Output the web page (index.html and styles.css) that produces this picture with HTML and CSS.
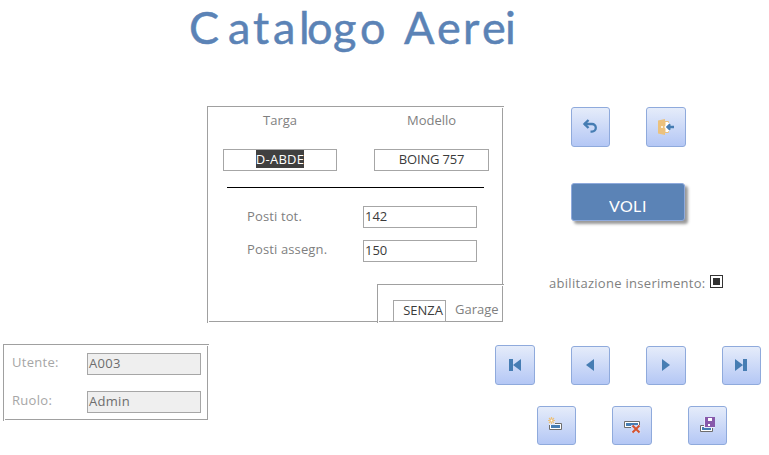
FILE: index.html
```html
<!DOCTYPE html>
<html lang="it">
<head>
<meta charset="utf-8">
<title>Catalogo Aerei</title>
<link rel="stylesheet" href="styles.css">
</head>
<body>
<header>
<svg class="title" width="340" height="65" role="img" aria-label="Catalogo Aerei"><text y="44" x="7 46 71 91 117 125 151 178 204 222 255 281 300 323">Catalogo Aerei</text></svg>
</header>
<main>
<section class="frame plane">
  <div class="heads"><span class="targa">Targa</span><span class="modello">Modello</span></div>
  <div class="ids"><div class="field center"><mark>D-ABDE</mark></div><div class="field center wide">BOING 757</div></div>
  <hr>
  <div class="row"><label>Posti tot.</label><div class="field">142</div></div>
  <div class="row second"><label>Posti assegn.</label><div class="field">150</div></div>
  <div class="frame garage"><div class="field small">SENZA</div><label>Garage</label></div>
</section>
<section class="actions">
  <div class="pair">
    <button class="btn" aria-label="Annulla"><svg width="17" height="16" viewBox="0 0 17 16"><path d="M2 5h8a3.800 3.800 0 0 1 0 7.600H8.500" fill="none" stroke="#467db3" stroke-width="2.300"/><path d="M6.500 1L2.500 5l4 4" fill="none" stroke="#467db3" stroke-width="2.400"/></svg></button>
    <button class="btn w40" aria-label="Esci"><svg width="18" height="18" viewBox="0 0 18 18"><path d="M8 3.500h3.500v11H8z" fill="#fff" stroke="#ebc17d"/><path d="M1 2.500L8 1v16l-7-1.500z" fill="#ebc17d"/><circle cx="5" cy="9" r="1" fill="#fff"/><path d="M10 9h3M13 6l-3 3l3 3" fill="none" stroke="#fff" stroke-width="4"/><path d="M10.500 9H17M13.200 6.200L10.400 9l2.800 2.800" fill="none" stroke="#467db3" stroke-width="2.300"/></svg></button>
  </div>
  <button class="voli"><svg width="40" height="20"><text y="16" x="0 11 24 33">VOLI</text></svg></button>
  <div class="enable"><label>abilitazione inserimento:</label><span class="check"></span></div>
</section>
</main>
<footer>
<section class="frame user">
  <div class="row"><label>Utente:</label><div class="field">A003</div></div>
  <div class="row"><label>Ruolo:</label><div class="field">Admin</div></div>
</section>
<nav>
  <div class="nav">
    <button class="btn w40 h40" aria-label="Primo"><svg width="14" height="14" viewBox="0 0 14 14"><path d="M1 1h4v12H1zM13 1v12L5 7z" fill="#467db3"/></svg></button>
    <button class="btn" aria-label="Precedente"><svg width="15" height="15" viewBox="0 0 15 15"><path d="M11 1v12L3 7z" fill="#467db3"/></svg></button>
    <button class="btn w40" aria-label="Successivo"><svg width="14" height="15" viewBox="0 0 14 15"><path d="M3 1v12l8-6z" fill="#467db3"/></svg></button>
    <button class="btn" aria-label="Ultimo"><svg width="15" height="15" viewBox="0 0 15 15"><path d="M1 1v12l8-6zM9 1h4v12H9z" fill="#467db3"/></svg></button>
  </div>
  <div class="edit">
    <button class="btn" aria-label="Nuovo"><svg width="17" height="17" viewBox="2 2 17 17"><path d="M3.500 8.500h12v6h-12z" fill="#fff" stroke="#6d6d6d"/><path d="M5 10h9v3H5z" fill="#467db3"/><path d="M3 5h6v5H3z" fill="#dfe7fa"/><g stroke="#ebc17d" stroke-width="1.200"><circle cx="5.500" cy="5.500" r="1.500" fill="#fff"/><path d="M5.500 2v2M5.500 7v2M2 5.500h2M7 5.500h2M3 3l1.300 1.300M8 3L6.700 4.300M3 8l1.300-1.300M8 8L6.700 6.700"/></g></svg></button>
    <button class="btn w40" aria-label="Elimina"><svg width="18" height="17" viewBox="0 0 18 17"><path d="M1.500 4.500h15v6h-15z" fill="#fff" stroke="#6d6d6d"/><path d="M3 6h12v3H3z" fill="#467db3"/><path d="M8 8h10v8H8z" fill="#cfdaf8"/><path d="M9.500 8.500l7 7M16.500 8.500l-7 7" stroke="#d6532f" stroke-width="2"/></svg></button>
    <button class="btn" aria-label="Salva"><svg width="17" height="17" viewBox="1 1 17 17"><path d="M2.500 9.500h12v6h-12z" fill="#fff" stroke="#6d6d6d"/><path d="M4 11h9v3H4z" fill="#467db3"/><path d="M6 1h11v11H6z" fill="#e6ecfc"/><path d="M7 1h10v10H7z" fill="#8759ab"/><path d="M10 2h4v3h-4zM10 8h2v2h-2z" fill="#fff"/></svg></button>
  </div>
</nav>
</footer>
</body>
</html>
```
FILE: styles.css
```css
* { box-sizing: border-box; }
body {
  margin: 0;
  width: 769px;
  height: 455px;
  overflow: hidden;
  background: #fff;
  color: #3b3b3b;
  font: 13px/20px "Open Sans", "Noto Sans", sans-serif;
}
header { height: 106px; padding-left: 182px; }
.title { display: block; font: 45px Lato, sans-serif; fill: #5b83b6; stroke: #5b83b6; stroke-width: .5px; }
main { display: flex; height: 238px; padding-left: 207px; }
.frame {
  background:
    linear-gradient(#a0a0a0, #a0a0a0) 0 0 / 100% 1px no-repeat,
    linear-gradient(#a0a0a0, #a0a0a0) 0 0 / 1px 100% no-repeat,
    linear-gradient(#a0a0a0, #a0a0a0) 2px calc(100% - 1px) / calc(100% - 3px) 1px no-repeat,
    linear-gradient(#a0a0a0, #a0a0a0) calc(100% - 1px) 2px / 1px calc(100% - 3px) no-repeat,
    #fff;
}
.plane { width: 297px; height: 217px; }
.heads { display: flex; height: 43px; padding-top: 4px; color: #7f7f7f; }
.targa { margin-left: 56px; width: 144px; }
.field {
  width: 114px;
  height: 22px;
  border: 1px solid #a6a6a6;
  padding-left: 1px;
  background: #fff;
  line-height: 19px;
  white-space: nowrap;
}
.ids { display: flex; gap: 37px; padding-left: 16px; height: 38px; }
.center { padding: 0; text-align: center; }
.wide { width: 115px; letter-spacing: -.2px; }
mark { display: inline-block; height: 18px; line-height: 19px; letter-spacing: .25px; background: #404040; color: #fff; vertical-align: top; }
hr { margin: 0 0 18px 20px; width: 257px; height: 1px; border: 0; background: #000; }
.row { display: flex; color: #3b3b3b; }
.row label, .garage label, .enable label { color: #7f7f7f; }
.plane .row { height: 34px; padding-left: 40px; }
.plane .row label { width: 116px; letter-spacing: .13px; }
.second label { margin-top: -1px; }
.garage { display: flex; width: 127px; height: 39px; margin: 10px 0 0 170px; padding: 16px 0 0 16px; }
.small { width: 53px; padding: 0 2px 0 0; text-align: right; }
.garage label { margin: -1px 0 0 9px; }
.actions { padding: 1px 0 0 45px; }
.pair { display: flex; gap: 36px; margin-left: 22px; }
.btn {
  display: grid;
  place-items: center;
  width: 39px;
  height: 39px;
  padding: 0;
  border: 1px solid #8faadc;
  border-radius: 3px;
  background: linear-gradient(#e5ecfa, #b4c7f5);
}
.w40 { width: 40px; }
.h40, .pair .btn { height: 40px; }
.voli {
  display: block;
  width: 114px;
  height: 38px;
  margin: 36px 0 0 22px;
  padding: 7px 0 0 0;
  border: 1px solid #8faadc;
  border-radius: 3px;
  background: #5b83b6;
  box-shadow: 3px 3px 3px #999;
}
.voli svg { display: block; margin-left: 37px; font: 16px Lato, sans-serif; fill: #fff; }
.enable { display: flex; margin-top: 52px; white-space: nowrap; }
.enable label { width: 161px; letter-spacing: .29px; }
.check { width: 13px; height: 13px; margin-top: 2px; border: 1px solid #333; background: #333 content-box; padding: 2px; }
footer { display: flex; padding-left: 3px; }
.user { width: 206px; height: 77px; padding: 9px 0 0 9px; }
.user .row { height: 38px; color: #6d6d6d; }
.user .row label { width: 75px; margin-top: -1px; color: #a6a6a6; letter-spacing: .3px; }
.user .field { background: #efefef; letter-spacing: .3px; }
nav { margin-left: 286px; padding-top: 1px; }
.nav { display: flex; gap: 36px; align-items: flex-end; }
.edit { display: flex; gap: 36px; margin: 21px 0 0 42px; }
```
